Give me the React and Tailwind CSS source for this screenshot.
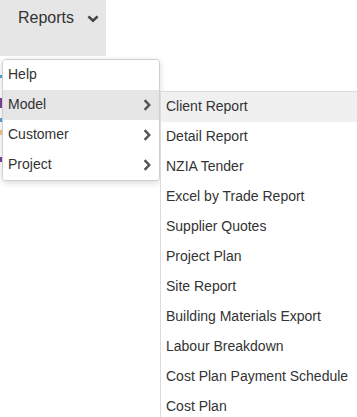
import { useState } from "react"

const mainItems = [
    { label: "Help", sub: false },
    { label: "Model", sub: true },
    { label: "Customer", sub: true },
    { label: "Project", sub: true },
]

const modelReports = [
    "Client Report",
    "Detail Report",
    "NZIA Tender",
    "Excel by Trade Report",
    "Supplier Quotes",
    "Project Plan",
    "Site Report",
    "Building Materials Export",
    "Labour Breakdown",
    "Cost Plan Payment Schedule",
    "Cost Plan",
]

function ChevronRight() {
    return (
        <svg width="8" height="12" viewBox="0 0 8 12" className="text-[#555]">
            <polyline points="1.6,1.2 6.2,6 1.6,10.8" fill="none" stroke="currentColor" strokeWidth="2.5" />
        </svg>
    )
}

function ChevronDown() {
    return (
        <svg width="12" height="8" viewBox="0 0 12 8" className="text-[#444]">
            <polyline points="1.4,1.4 6,5.8 10.6,1.4" fill="none" stroke="currentColor" strokeWidth="2.6" />
        </svg>
    )
}

export default function App() {
    const [active, setActive] = useState("Model")
    const [hovered, setHovered] = useState("Client Report")

    return (
        <div className="w-[357px] h-[417px] bg-white overflow-hidden font-[family-name:'Liberation_Sans',Arial,sans-serif] text-[#333]">
            {/* Reports toolbar button */}
            <div className="relative w-[106px]">
                <button className="w-[106px] h-[56px] bg-[#e6e6e6] flex items-start gap-[13px] pt-[9px] pl-[18px] text-[16px] leading-[18px] text-[#333]">
                    <span>Reports</span>
                    <span className="pt-[6px]">
                        <ChevronDown />
                    </span>
                </button>

                {/* main dropdown */}
                <div className="absolute left-[2px] top-[59px] w-[158px] bg-white border border-[#cfcfcf] rounded-[4px] shadow-[0_2px_6px_rgba(0,0,0,0.15)] overflow-hidden z-10">
                    {mainItems.map((item) => (
                        <div
                            key={item.label}
                            onMouseEnter={() => item.sub && setActive(item.label)}
                            className={`h-[30px] flex items-center justify-between pl-[5px] pr-[8px] pb-[1px] text-[14px] cursor-pointer ${
                                active === item.label ? "bg-[#e6e6e6]" : "bg-white"
                            }`}
                        >
                            <span>{item.label}</span>
                            {item.sub && <ChevronRight />}
                        </div>
                    ))}
                </div>

                {/* Model submenu */}
                {active === "Model" && (
                    <div className="absolute left-[160px] top-[91px] w-[230px] bg-white border border-[#dcdcdc] z-20">
                        {modelReports.map((r) => (
                            <div
                                key={r}
                                onMouseEnter={() => setHovered(r)}
                                className={`h-[30px] flex items-center pl-[5px] pb-[1px] text-[14px] cursor-pointer ${
                                    hovered === r ? "bg-[#f0f0f0]" : "bg-white"
                                }`}
                            >
                                {r}
                            </div>
                        ))}
                    </div>
                )}
            </div>

            {/* bits of the page underneath */}
            <div className="flex flex-col w-[2px] mt-[19px]">
                <div className="h-[3px] bg-[#4da3e0]" />
                <div className="h-[20px]" />
                <div className="h-[10px] bg-[#7b3fa0]" />
                <div className="h-[10px]" />
                <div className="h-[4px] bg-[#4da3e0]" />
                <div className="h-[8px]" />
                <div className="h-[5px] bg-[#f0c48a]" />
                <div className="h-[22px]" />
                <div className="h-[5px] bg-[#7b3fa0]" />
            </div>
        </div>
    )
}
